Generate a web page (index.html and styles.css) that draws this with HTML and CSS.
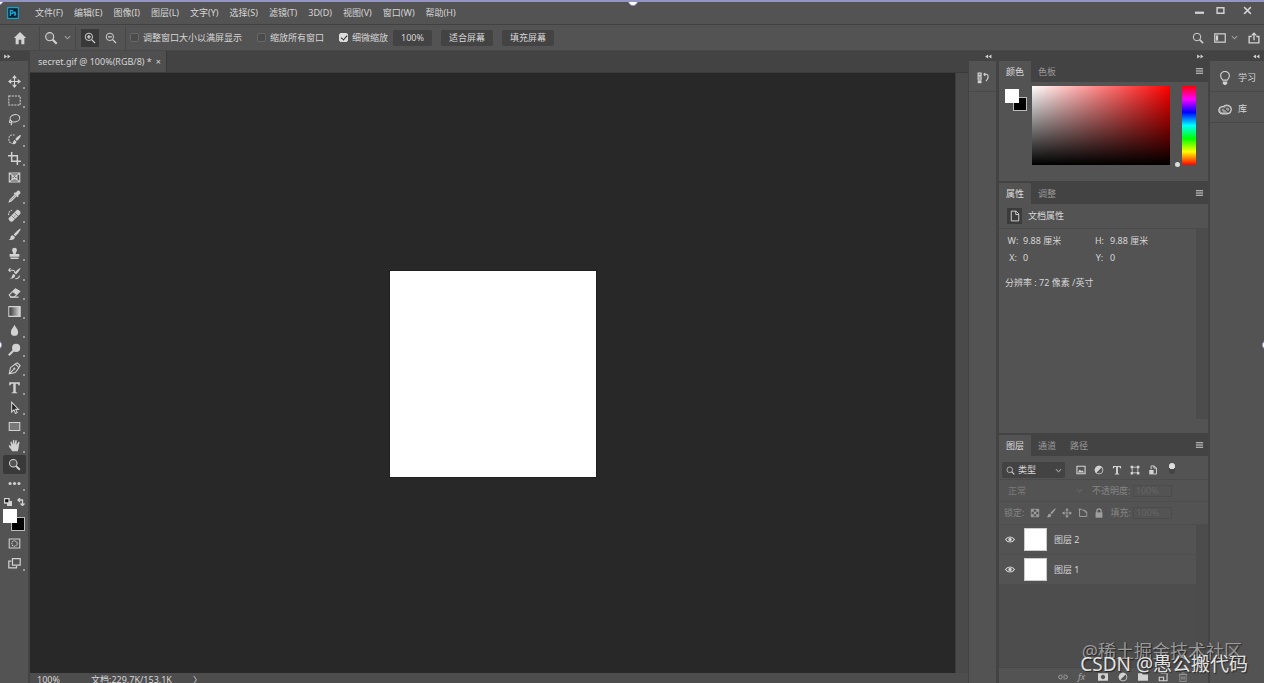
FILE: index.html
```html
<!DOCTYPE html>
<html lang="zh-CN">
<head>
<meta charset="utf-8">
<title>secret.gif</title>
<link rel="stylesheet" href="styles.css">
</head>
<body>
<svg class="sprite" aria-hidden="true">
  <symbol id="zoom" viewBox="0 0 16 16"><circle cx="6.5" cy="6.5" r="4.6" fill="#777" fill-opacity=".4"/><path d="M10 10l4.5 4.5" stroke-width="2.4"/></symbol>
  <symbol id="search" viewBox="0 0 16 16"><circle cx="6.7" cy="6.7" r="5"/><path d="M10.3 10.3l4.5 4.5" stroke-width="2"/></symbol>
  <symbol id="chev" viewBox="0 0 8 8"><path d="M1 2.5l3 3 3-3"/></symbol>
  <symbol id="menu" viewBox="0 0 10 8"><path d="M1 1.5h8M1 4h8M1 6.5h8"/></symbol>
  <symbol id="move" viewBox="0 0 16 16"><path d="M8 3v10M3 8h10"/><path class="f" d="M8 0l3 4H5zM8 16l3-4H5zM0 8l4-3v6zM16 8l-4-3v6z"/></symbol>
  <symbol id="brush" viewBox="0 0 16 16"><path class="f" d="M15.5.5c-1.5 0-7 5.5-8.5 7.5l2 2c2-1.500 7-7.500 6.500-9.500zM6 9c-2 0-3 1.500-3 3.200C2.800 13.700 1.500 14 .5 14c2.500 1.700 8 1.200 8-2.800z"/></symbol>
  <symbol id="type" viewBox="0 0 16 16"><path class="f" d="M1.500 1.500h13v4h-1.300c-.4-1.700-1-2.200-3.700-2.200v9.500c0 .8.700 1.100 2 1.200v1h-7v-1c1.300-.1 2-.4 2-1.200V3.300c-2.700 0-3.300.5-3.700 2.200H1.500z"/></symbol>
  <symbol id="half" viewBox="0 0 16 16"><circle cx="8" cy="8" r="6.300"/><path class="f" d="M12.600 3.400A6.500 6.500 0 0 0 3.400 12.600z"/></symbol>
  <symbol id="lock" viewBox="0 0 16 16"><path d="M4.500 8V5a3.500 3.500 0 0 1 7 0v3" stroke-width="2"/><path class="f" d="M2.500 7h11v8.500h-11z"/></symbol>
  <symbol id="eye" viewBox="0 0 18 12"><path d="M1 6c4-6 12-6 16 0-4 6-12 6-16 0z" stroke-width="2"/><circle class="f" cx="9" cy="6" r="3"/></symbol>
  <symbol id="doc" viewBox="0 0 16 16"><path d="M3 1.500h6.500L13 5v9.500H3zM9 1.500V6h4"/></symbol>
  <symbol id="expand" viewBox="0 0 8 6"><path class="f" d="M0 .5L3.500 3 0 5.500zM4 .5L7.500 3 4 5.500z"/></symbol>
  <symbol id="collapse" viewBox="0 0 8 6"><path class="f" d="M3.500.500L0 3l3.500 2.500zM7.500.500L4 3l3.500 2.500z"/></symbol>
</svg>
<div class="app">
  <header class="menubar">
    <svg class="logo" viewBox="0 0 12 12" role="img" aria-label="Ps"><path d="M.7.7h10.600v10.600H.7z" fill="#061e2b" stroke="#10a5cf" stroke-width="1.200"/><path d="M3.300 9V3.300h1.200a1.500 1.500 0 0 1 0 3.200H3.300M9 5.300c-1.800-.6-2.300.8-1 1.300s.8 2-1.200 1.400" stroke="#14acd8"/></svg>
    <nav class="menus">
      <button>文件(F)</button><button>编辑(E)</button><button>图像(I)</button><button>图层(L)</button><button>文字(Y)</button><button>选择(S)</button><button>滤镜(T)</button><button>3D(D)</button><button>视图(V)</button><button>窗口(W)</button><button>帮助(H)</button>
    </nav>
    <div class="window">
      <button aria-label="最小化"><svg viewBox="0 0 8 8"><path d="M0 6h8" stroke-width="2"/></svg></button>
      <button aria-label="最大化"><svg viewBox="0 0 8 8"><path d="M1 1.500h6v5H1z"/></svg></button>
      <button class="close" aria-label="关闭"><svg viewBox="0 0 8 8"><path d="M1 1l6 6M7 1L1 7"/></svg></button>
    </div>
  </header>

  <section class="options">
    <button class="home" aria-label="主页"><svg viewBox="0 0 16 16"><path class="f" d="M8 1L1 8h2v7h3.500v-5h3v5H13V8h2z"/></svg></button>
    <button class="current" aria-label="缩放工具"><svg><use href="#zoom"/></svg><svg class="small dim"><use href="#chev"/></svg></button>
    <div class="zooms">
      <button class="on" aria-label="放大"><svg viewBox="0 0 16 16"><circle cx="6.500" cy="6.500" r="4.900"/><path d="M4 6.500h5M6.500 4v5M10.200 10.200l4.500 4.500" stroke-width="1.700"/></svg></button>
      <button aria-label="缩小"><svg viewBox="0 0 16 16"><circle cx="6.500" cy="6.500" r="4.900"/><path d="M4 6.500h5M10.200 10.200l4.500 4.500" stroke-width="1.700"/></svg></button>
    </div>
    <div class="checks">
      <label><input type="checkbox">调整窗口大小以满屏显示</label>
      <label><input type="checkbox">缩放所有窗口</label>
      <label><input type="checkbox" checked>细微缩放</label>
    </div>
    <div class="fits"><button>100%</button><button>适合屏幕</button><button>填充屏幕</button></div>
    <div class="right">
      <button aria-label="搜索"><svg><use href="#search"/></svg></button>
      <button class="space" aria-label="工作区"><svg viewBox="0 0 16 16"><path d="M1 2.500h14v11H1z" stroke-width="1.600"/><path class="f" d="M2.500 4.500h3v7h-3z"/></svg><svg class="small dim"><use href="#chev"/></svg></button>
      <button aria-label="共享"><svg viewBox="0 0 16 16"><path d="M5 6H1.500v8.500h13V6H11M8 11V2M5 4.500L8 1.500l3 3" stroke-width="1.800"/></svg></button>
    </div>
  </section>

  <div class="work">
    <aside class="tools">
      <div class="strip left"><svg><use href="#expand"/></svg></div>
      <div class="toolset">
        <div class="group">
          <button class="more" aria-label="移动"><svg><use href="#move"/></svg></button>
          <button class="more" aria-label="选框"><svg viewBox="0 0 16 16"><path d="M1 2.500h14v11H1z" stroke-dasharray="2.500 1.200"/></svg></button>
          <button class="more" aria-label="套索"><svg viewBox="0 0 16 16"><ellipse cx="8.500" cy="6.500" rx="6" ry="4.500" transform="rotate(-15 8.500 6.500)"/><path d="M3 9c-2 1-1.500 3.500.5 3s1-3-.5-2.500M4.500 12c.5 1 0 2-1 3"/></svg></button>
        </div>
        <div class="group">
          <button class="more" aria-label="快速选择"><svg viewBox="0 0 16 16"><path d="M8 2.500H4.500C2.500 2.500 1 4.500 1 7.500s1.500 5 4 5" stroke-dasharray="2 1.300"/><path class="f" d="M16 2.500c-2 0-5 2.500-7 5l1.800 2.200C13 8 16 5 16 2.500zM8.300 8.700C6.500 9.200 6.800 11 6 12.200c-.5.600-1 .8-1.500.8 2 1.500 6 .7 5.800-2.300z"/></svg></button>
          <button class="more" aria-label="裁剪"><svg viewBox="0 0 16 16"><path d="M4.500 0v11.500H16M0 4.500h11.500V16" stroke-width="1.800"/></svg></button>
          <button aria-label="图框"><svg viewBox="0 0 16 16"><path d="M1.500 2.500h13v11h-13zM2 3l12 10M14 3L2 13M5 5h6v6H5z"/></svg></button>
          <button class="more" aria-label="吸管"><svg viewBox="0 0 16 16"><path class="f" d="M9.500 3.500l2-2.300c1.800-1.800 5 1.500 3.300 3.300L12.500 6.500l.8 1-1.500 1.500L7 4.200l1.500-1.500z"/><path d="M9 5.500L2.500 12l-1 2.500L4 13.500 10.500 7" style="fill:#999"/></svg></button>
          <button class="more" aria-label="修复画笔"><svg viewBox="0 0 16 16"><path d="M1 7.500C0 4 3 1 6 2.200" stroke-dasharray="2 1"/><path class="f" d="M1 11L10.500 1.500c2-2 6.500 2.500 4.500 4.500L5.500 15.500c-2 1.500-6-2.500-4.500-4.500z"/><path d="M4.500 8l4.200 4.200M8 4.500l4.200 4.200M7.500 8.500h.8M9 8.500h.8" stroke="#666" stroke-width="1"/></svg></button>
          <button class="more" aria-label="画笔"><svg><use href="#brush"/></svg></button>
          <button class="more" aria-label="图章"><svg viewBox="0 0 16 16"><path class="f" d="M8 1a3 3 0 0 1 3 3c0 1.500-1.500 2.500-1.500 4.500H14V12H2V8.500h4.500C6.500 6.500 5 5.500 5 4a3 3 0 0 1 3-3zM3 13h10v1.700H3z"/></svg></button>
        </div>
        <div class="group">
          <button class="more" aria-label="历史画笔"><svg viewBox="0 0 16 16"><path d="M1 4h4.500c3 0 3 2 2 3M3 1.500L.8 4 3 6M9 14.500c3 0 5-1.500 5-4"/><path class="f" d="M15.500 1c-3 1-5.500 4-7.500 6.500l1.800 1.800C12 7 15 4 15.500 1zM7 8.500C5 9 5.500 11 4.500 12.500c-.5.800-1.500 1-2.500 1 2.500 1.500 7 .5 6.800-3.200z"/></svg></button>
          <button class="more" aria-label="橡皮擦"><svg viewBox="0 0 16 16"><path d="M1.500 11L9 3.500l5.500 3L8 13.500H3.500z"/><path class="f" d="M5.500 7.500L9.500 3l5.500 3.500L10.500 11zM2 13h11v1.500H3z"/></svg></button>
          <button class="more" aria-label="渐变"><svg viewBox="0 0 16 16"><defs><linearGradient id="fade"><stop stop-color="#333"/><stop offset="1" stop-color="#ddd"/></linearGradient></defs><path d="M1 2h14v12H1z" style="fill:url(#fade)"/></svg></button>
          <button class="more" aria-label="模糊"><svg viewBox="0 0 16 16"><path class="f" d="M8 1c1 3 4.500 5.500 4.500 9a4.500 4.500 0 0 1-9 0C3.500 6.500 7 4 8 1z"/></svg></button>
          <button class="more" aria-label="减淡"><svg viewBox="0 0 16 16"><circle class="f" cx="10" cy="6" r="5"/><path d="M6.500 9.500L1 15" stroke-width="2.400"/></svg></button>
          <button class="more" aria-label="钢笔"><svg viewBox="0 0 16 16"><path d="M1.500 14.500L3 7l6-4.500L13.500 7 9 13zM1.500 14.500L7 9M9.500 2l2-1 3.500 3.500-1.500 2"/><circle class="f" cx="7.800" cy="8.200" r="1.300"/></svg></button>
          <button class="more" aria-label="文字"><svg><use href="#type"/></svg></button>
        </div>
        <div class="group">
          <button class="more" aria-label="路径选择"><svg viewBox="0 0 16 16"><path d="M4.500 1.500v12L7.300 11l2 4.300 2-1-2-4h3.700z" style="fill:#222"/></svg></button>
          <button class="more" aria-label="矩形"><svg viewBox="0 0 16 16"><path d="M1.500 3h13v10h-13z" style="fill:#777"/></svg></button>
          <button class="more" aria-label="抓手"><svg viewBox="0 0 16 16"><path class="f" d="M5 15C4 12 1 10 .8 8.500c.3-1.200 1.800-.8 3.200 1L3 4c0-1.200 1.500-1.200 1.800 0L6 7V2c0-1.300 1.700-1.300 1.800 0L8 7l1-5c.3-1.200 1.800-1 1.700.3L10.500 7.500 12.500 4c.6-1 2-.4 1.600.8C13 8.500 13.500 11 12 15z"/></svg></button>
          <button class="on" aria-label="缩放"><svg><use href="#zoom"/></svg></button>
          <button class="more" aria-label="编辑工具栏"><svg viewBox="0 0 16 16"><circle class="f" cx="2.500" cy="8" r="1.900"/><circle class="f" cx="8" cy="8" r="1.900"/><circle class="f" cx="13.500" cy="8" r="1.900"/></svg></button>
        </div>
        <div class="swaps"><svg viewBox="0 0 8 8"><path class="f" d="M3 3h5v5H3z"/><path d="M.5.500h4.500v4.500H.5z" style="fill:#111"/></svg><svg viewBox="0 0 8 8"><path d="M1 2h4.500v5M3 0L1 2l2 2M3.500 5.500l2 2 2-2"/></svg></div>
        <div class="swatch"><button class="back" aria-label="背景色"></button><button class="fore" aria-label="前景色"></button></div>
        <button class="mask" aria-label="快速蒙版"><svg viewBox="0 0 16 16"><path d="M1.500 2.500h13v11h-13z"/><circle cx="8" cy="8" r="3.300" stroke-dasharray="1.500 .8"/></svg></button>
        <button class="more" aria-label="屏幕模式"><svg viewBox="0 0 16 16"><path d="M5.500 2h9.500v8H5.500zM4 5H1v8.500h9.500V11" stroke-width="1.500"/></svg></button>
      </div>
    </aside>

    <main class="document">
      <div class="doctabs"><div class="doctab"><span>secret.gif @ 100%(RGB/8) *</span><button aria-label="关闭文档">×</button></div></div>
      <div class="stage"><div class="canvas"><div class="paper"></div></div><div class="scroll"></div></div>
      <footer class="status"><span class="percent">100%</span><span>文档:229.7K/153.1K</span><span class="arrow">〉</span></footer>
    </main>

    <aside class="dock">
      <div class="strip"><svg><use href="#collapse"/></svg></div>
      <button class="history" aria-label="历史记录"><svg viewBox="0 0 16 16"><path d="M1.500 1.500h4v3h-4zM1.500 6.500h4v3h-4zM9 3l2-1.500M9 3l2 2M9 3h3c4 0 3.500 6 0 9" stroke-width="1.600"/><path class="f" d="M1 11h5v4H1z"/></svg></button>
    </aside>

    <aside class="panels">
      <div class="strip"><svg><use href="#expand"/></svg></div>
      <section class="panel">
        <div class="tabs"><button class="on">颜色</button><button>色板</button><svg class="burger"><use href="#menu"/></svg></div>
        <div class="color">
          <div class="swatch"><button class="back" aria-label="背景色"></button><button class="fore" aria-label="前景色"></button></div>
          <div class="field"></div>
          <div class="hue"><input type="range" aria-label="色相" value="0"></div>
        </div>
      </section>
      <section class="panel props">
        <div class="tabs"><button class="on">属性</button><button>调整</button><svg class="burger"><use href="#menu"/></svg></div>
        <div class="title"><span class="tile"><svg><use href="#doc"/></svg></span>文档属性</div>
        <div class="info">
          <div class="facts">
            <dl><dt>W:</dt><dd>9.88 厘米</dd><dt>H:</dt><dd>9.88 厘米</dd><dt>X:</dt><dd>0</dd><dt>Y:</dt><dd>0</dd></dl>
            <p>分辨率 : 72 像素 /英寸</p>
          </div>
          <div class="rail"></div>
        </div>
      </section>
      <section class="panel layers">
        <div class="tabs"><button class="on">图层</button><button>通道</button><button>路径</button><svg class="burger"><use href="#menu"/></svg></div>
        <div class="filter">
          <div class="kind"><svg><use href="#search"/></svg><select aria-label="筛选"><option>类型</option></select><svg class="small dim"><use href="#chev"/></svg></div>
          <div class="icons">
            <svg viewBox="0 0 16 16"><path d="M1.500 2h13v12h-13z" stroke-width="1.800"/><path class="f" d="M3 12l3-5 2.500 3L10 8.500l3 3.500z"/></svg>
            <svg><use href="#half"/></svg><svg><use href="#type"/></svg>
            <svg viewBox="0 0 16 16"><path d="M3.500 3.500h9v9h-9z"/><path class="f" d="M1 1h4v4H1zM11 1h4v4h-4zM1 11h4v4H1zM11 11h4v4h-4z"/></svg>
            <svg viewBox="0 0 16 16"><path d="M5 7V1.500h5L13.500 5v9.500H9M9.500 1.500V5h4" stroke-width="1.500"/><path class="f" d="M2 8h7v7H2z"/></svg>
          </div>
          <span class="toggle"></span>
        </div>
        <div class="blend"><select aria-label="混合模式" disabled><option>正常</option></select><svg class="small"><use href="#chev"/></svg><label>不透明度: <input value="100%" disabled></label></div>
        <div class="locks"><span>锁定:</span>
          <svg viewBox="0 0 16 16"><path d="M2 2h12v12H2z"/><path class="f" d="M2 2h4v4H2zM10 2h4v4h-4zM6 6h4v4H6zM2 10h4v4H2zM10 10h4v4h-4z"/></svg>
          <svg><use href="#brush"/></svg><svg><use href="#move"/></svg>
          <svg viewBox="0 0 16 16"><path d="M2.500 1v12.500H14V6.500L11 3.500H7.500L5.500 2H1M11 3.500v3h3" stroke-width="1.500"/></svg>
          <svg><use href="#lock"/></svg>
          <label>填充: <input value="100%" disabled></label></div>
        <div class="list">
          <ul><li><svg class="eye"><use href="#eye"/></svg><span class="thumb"></span>图层 2</li><li><svg class="eye"><use href="#eye"/></svg><span class="thumb"></span>图层 1</li></ul>
          <div class="rail"></div>
        </div>
        <div class="actions">
          <svg class="dim" viewBox="0 0 16 16"><path d="M7 5H4a3 3 0 0 0 0 6h3M9 5h3a3 3 0 0 1 0 6H9M5 8h6" stroke-width="1.500"/></svg>
          <i class="dim">fx</i>
          <svg viewBox="0 0 16 16"><path class="f" fill-rule="evenodd" d="M0 2h16v12H0zM8 4.500a3.500 3.500 0 1 0 .01 0z"/></svg>
          <svg><use href="#half"/></svg>
          <svg viewBox="0 0 16 16"><path class="f" d="M0 2h6l2 2h8v10H0z"/></svg>
          <svg viewBox="0 0 16 16"><path d="M4 2h10.500v12H9V8.500H2V14h7" stroke-width="1.700"/></svg>
          <svg class="dim" viewBox="0 0 16 16"><path d="M1.500 4h13M6 3V1.500h4V3M3 4.500V15h10V4.500M6 7v5M8 7v5M10 7v5"/></svg>
        </div>
      </section>
    </aside>

    <aside class="side">
      <div class="strip"><svg><use href="#collapse"/></svg></div>
      <button><svg viewBox="0 0 16 16"><path d="M5.500 10.500C4.500 9 3 8 3 5.500a5 5 0 0 1 10 0C13 8 11.500 9 10.500 10.500z"/><path class="f" d="M5.500 12h5v2L9 16H7l-1.500-2z"/></svg>学习</button>
      <button><svg viewBox="0 0 16 16"><path d="M5 13.500a4.200 4.200 0 1 1 1-8.300A5.300 5.300 0 0 1 15.200 8c0 3.200-2 5.500-5 5.500z" fill="#999"/><path d="M5.500 11.200a2.200 2.200 0 1 1 1.800-3.700L11 11M8 9a2.800 2.800 0 1 1 2.700 2.300" stroke="#4a4a4a"/></svg>库</button>
    </aside>
  </div>
  <i class="knob corner"></i><i class="knob top"></i><i class="knob west"></i><i class="knob east"></i>
  <div class="credit"><span class="faint">@稀土掘金技术社区</span><span>CSDN @愚公搬代码</span></div>
</div>
</body>
</html>
```

FILE: styles.css
```css
* { box-sizing: border-box; }
body { margin: 0; background: #535353; color: #d6d6d6; font: 9px/12px "Noto Sans", "Noto Sans CJK SC", sans-serif; }
button, input, select { margin: 0; padding: 0; border: 0; border-radius: 0; background: none; color: inherit; font: inherit; }
button { display: flex; align-items: center; justify-content: center; }
svg { flex: none; width: 12px; height: 12px; fill: none; stroke: #d2d2d2; stroke-width: 1.3; color: #d2d2d2; }
.f { fill: #d2d2d2; stroke: none; }
.sprite { position: absolute; width: 0; height: 0; }
.small { width: 7px; height: 7px; }
.dim { opacity: .6; }

.app { position: relative; display: flex; flex-direction: column; height: 100vh; overflow: hidden; border-top: 2px solid #9494c5; }
.menubar { display: flex; align-items: center; flex: none; height: 23px; padding-left: 7px; border-bottom: 1px solid #414141; }
.logo { width: 12px; height: 12px; }
.menus { display: flex; gap: 11px; padding-left: 16px; }
.menus button { white-space: nowrap; }
.window { display: flex; gap: 12px; margin: 0 12px 6px auto; }
.window svg { width: 9px; height: 9px; }
.window .close { padding-left: 6px; }

.options { display: flex; align-items: center; flex: none; height: 26px; padding: 0 4px 0 0; border-bottom: 1px solid #484848; }
.home { width: 40px; height: 24px; border-right: 1px solid #484848; }
.home svg { width: 14px; height: 14px; }
.current { gap: 6px; width: 36px; height: 24px; border-right: 1px solid #484848; }
.current svg:first-child { width: 14px; height: 14px; }
.zooms { display: flex; gap: 3px; width: 50px; height: 24px; align-items: center; padding-left: 5px; border-right: 1px solid #484848; }
.zooms button { width: 18px; height: 18px; }
.on { background: #393939; }
.checks { display: flex; gap: 15px; padding-left: 4px; }
.checks label { display: flex; align-items: center; gap: 4px; white-space: nowrap; }
.checks input { appearance: none; width: 9px; height: 9px; border: 1px solid #676767; border-radius: 2px; background: #4b4b4b; }
.checks input:checked { background: #ddd; border-color: #ddd; }
.checks input:checked::after { content: ""; display: block; width: 3px; height: 5px; margin-left: 2px; border: solid #333; border-width: 0 1px 1px 0; transform: rotate(40deg); }
.fits { display: flex; gap: 9px; padding-left: 5px; }
.fits button { height: 16px; padding: 0 8px; background: #434343; border-radius: 2px; }
.right { display: flex; gap: 10px; margin-left: auto; }
.space { gap: 5px; }

.work { display: flex; flex: 1; min-height: 0; }
.strip { display: flex; justify-content: flex-end; align-items: center; flex: none; height: 10px; padding-right: 4px; background: #434343; }
.strip svg { width: 7px; height: 5px; }
.left { justify-content: flex-start; padding: 0 0 0 4px; }
.tools { width: 30px; flex: none; border-right: 2px solid #444; }
.toolset { padding: 11px 0 0 3px; }
.toolset svg { width: 13px; height: 13px; }
.group { padding-bottom: 1px; }
.toolset > button, .group button { position: relative; width: 23px; height: 19px; border-radius: 2px; }
.more::after { content: ""; position: absolute; right: 1px; bottom: 2px; width: 2px; height: 2px; background: #999; }
.toolset .swaps { display: flex; gap: 5px; padding: 4px 0 3px 1px; }
.swaps svg { width: 8px; height: 8px; }
.toolset .swaps svg { width: 8px; height: 8px; }
.swatch { position: relative; flex: none; width: 22px; height: 22px; }
.swatch button { position: absolute; width: 14px; height: 14px; }
.fore { top: 0; left: 0; background: #fff; }
.back { right: 0; bottom: 0; background: #000; outline: 1px solid #bbb; outline-offset: -1px; }
.toolset > .mask { margin: 3px 0 1px; }

.document { display: flex; flex-direction: column; flex: 1; min-width: 0; }
.doctabs { display: flex; flex: none; height: 22px; background: #434343; border-bottom: 1px solid #3a3a3a; }
.doctab { display: flex; align-items: center; gap: 4px; padding: 1px 5px 0 8px; background: #4f4f4f; border-right: 1px solid #393939; white-space: nowrap; }
.stage { display: flex; flex: 1; min-height: 0; }
.canvas { display: grid; place-items: center; flex: 1; padding-top: 2px; background: #282828; }
.paper { width: 206px; height: 206px; background: #fff; outline: 1px solid #202020; }
.scroll { width: 13px; background: #4a4a4a; border-left: 1px solid #3c3c3c; }
.status { display: flex; flex: none; height: 10px; padding: 1px 0 0 7px; white-space: nowrap; background: #4d4d4d; }
.percent { width: 54px; }
.arrow { padding-left: 21px; }

.dock { width: 31px; flex: none; border: solid #434343; border-width: 0 3px 0 1px; }
.history { width: 100%; height: 31px; padding-top: 3px; border-bottom: 1px solid #494949; }

.panels { display: flex; flex-direction: column; flex: none; width: 211px; border-right: 2px solid #434343; }
.panel { flex: none; }
.tabs { display: flex; flex: none; height: 21px; background: #434343; color: #999; }
.tabs button { width: 32px; }
.tabs .on { background: #535353; color: #ddd; }
.burger { width: 9px; height: 8px; margin: 6px 4px 0 auto; }
.color { display: flex; height: 101px; padding: 4px 12px 0 6px; border-bottom: 2px solid #434343; }
.color .swatch { margin: 3px 5px 0 0; }
.field { flex: 1; height: 79px; background: linear-gradient(to top, #000, transparent), linear-gradient(to right, #fff, #f00); }
.hue { position: relative; width: 14px; height: 79px; margin-left: 12px; }
.hue input { display: block; appearance: none; width: 14px; height: 79px; writing-mode: vertical-lr; background: linear-gradient(#f00, #f0f, #00f, #0ff, #0f0, #ff0, #f00); }
.hue input::-webkit-slider-thumb { appearance: none; width: 14px; height: 1px; background: transparent; }
.hue::after { content: ""; position: absolute; left: -7px; bottom: -2px; width: 5px; height: 5px; border-radius: 50%; background: #ddd; }
.props { display: flex; flex-direction: column; height: 252px; border-bottom: 2px solid #434343; }
.title { display: flex; align-items: center; gap: 6px; flex: none; height: 25px; padding-left: 8px; border-bottom: 1px solid #4b4b4b; }
.tile { display: grid; place-items: center; width: 15px; height: 16px; background: #3b3b3b; }
.info { display: flex; flex: 1; }
.facts { flex: 1; padding: 6px 0 0 6px; }
dl { display: grid; grid-template-columns: 14px 66px 15px 1fr; row-gap: 5px; column-gap: 3px; margin: 0; padding-left: 1px; }
dt { text-align: center; }
dd { margin: 0; }
p { margin: 13px 0 0; }
.rail { width: 12px; margin-bottom: 14px; background: #4c4c4c; }

.layers { display: flex; flex-direction: column; flex: 1; min-height: 0; }
.filter { display: flex; align-items: center; flex: none; height: 24px; padding: 5px 4px 0 3px; border-bottom: 1px solid #4b4b4b; }
.kind { display: flex; align-items: center; gap: 3px; width: 63px; height: 16px; padding: 0 3px 0 4px; background: #434343; border-radius: 2px; }
.kind svg:first-child { width: 9px; height: 9px; }
select { appearance: none; flex: 1; min-width: 0; }
.icons { display: flex; gap: 8px; padding-left: 11px; }
.icons svg, .locks svg { width: 10px; height: 10px; }
.toggle { width: 6px; height: 11px; margin: 0 0 3px 11px; border-radius: 3px; background: radial-gradient(circle at 3px 3px, #ddd 3px, #444 3px); }
.blend, .locks { display: flex; align-items: center; flex: none; height: 22px; padding-left: 5px; color: #858585; border-bottom: 1px solid #4d4d4d; }
.blend select { flex: none; width: 72px; padding-left: 4px; color: #7c7c7c; opacity: 1; }
.blend svg { opacity: .15; }
.blend label { padding-left: 9px; }
.blend input, .locks input { width: 39px; height: 12px; padding-left: 2px; border: 1px solid #4c4c4c; color: #656565; vertical-align: top; }
.locks { gap: 6px; border: 0; }
.locks svg { opacity: .6; }
.list { display: flex; flex: 1; min-height: 0; padding-top: 1px; background: #4d4d4d; }
ul { flex: 1; margin: 0; padding: 0; list-style: none; }
li { display: flex; align-items: center; height: 30px; padding-left: 6px; background: #535353; border-bottom: 1px solid #4e4e4e; }
.eye { width: 10px; height: 7px; }
.thumb { width: 23px; height: 23px; margin: 0 7px 0 9px; background: #fff; border: 1px solid #ccc; }
.list .rail { margin: 0; }
.actions { display: flex; align-items: center; justify-content: flex-end; gap: 10px; flex: none; height: 16px; padding: 3px 20px 0 0; border-top: 1px solid #484848; }
.actions svg { width: 10px; height: 10px; }
.actions i { width: 10px; }

.side { flex: 1 0 54px; max-width: 54px; }
.side button { gap: 6px; width: 100%; height: 31px; padding: 3px 0 0 8px; justify-content: flex-start; border-bottom: 1px solid #494949; }
.side svg { width: 14px; height: 14px; }
.side .strip svg { width: 7px; height: 5px; }

.knob { position: absolute; width: 10px; height: 10px; border-radius: 50%; background: #fff; border: 1px solid #9494c5; }
.corner { top: -7px; left: -6px; }
.top { top: -6px; left: 50%; margin-left: -4px; }
.west, .east { top: 50%; margin-top: -3px; }
.west { left: -8px; }
.east { right: -8px; }
.credit { position: absolute; right: 16px; bottom: 7px; display: flex; flex-direction: column; align-items: flex-end; font-size: 19px; line-height: 24px; color: #e2e2e2; text-shadow: 1px 1px 1px #222; white-space: nowrap; pointer-events: none; }
.faint { margin: 0 6px -11px 0; color: #999; font-size: 18px; }
```
